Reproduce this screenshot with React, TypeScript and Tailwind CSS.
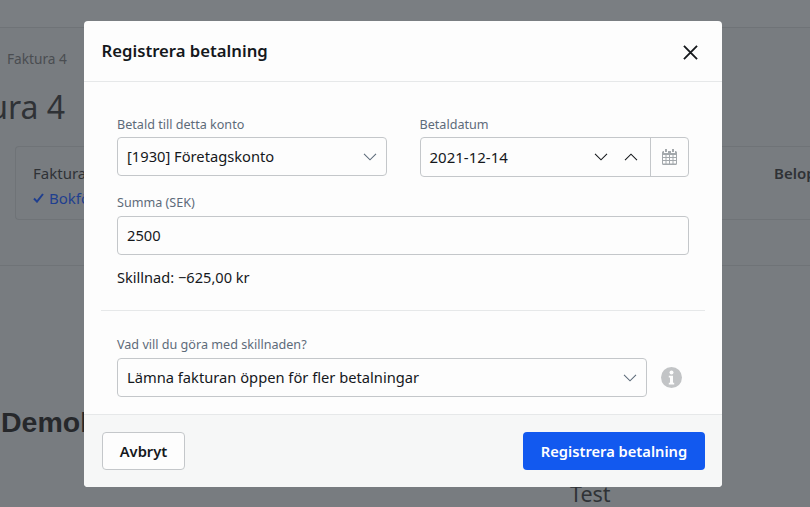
import React from "react";

function Chevron({ up = false, className = "" }: { up?: boolean; className?: string }) {
  return (
    <svg width="14" height="8" viewBox="0 0 14 8" fill="none" className={className}>
      <path d={up ? "M1 7.2 7 1.2l6 6" : "M1 .8l6 6 6-6"} stroke="currentColor" strokeWidth="1.1" />
    </svg>
  );
}

function Background() {
  return (
    <div className="h-[507px] w-[810px] overflow-hidden bg-[#787c80] font-['Noto_Sans',sans-serif] text-[#2f3236]">
      <div className="h-[28px] border-b border-[#6f7377] bg-[#7a7e82]" />
      <div className="pl-[7px] pt-[22px] text-[13.7px] leading-[18px] text-[#4a4d51]">Faktura 4</div>
      <div className="ml-[-75px] mt-[17px] text-[32px] leading-[44px] text-[#2f3236]">Faktura 4</div>
      <div className="ml-[15px] mt-[17px] flex h-[74px] justify-between rounded-l border border-r-0 border-[#6f7377] pl-[17px] pt-[14px] text-[15px] leading-[24px]">
        <div>
          <div className="text-[#2f3236]">Faktura</div>
          <div className="mt-[1px] flex items-center gap-[5px] text-[#1f3f8f]">
            <svg width="11" height="10" viewBox="0 0 11 10" fill="none">
              <path d="M1 5.5 4 8.6 10 1" stroke="currentColor" strokeWidth="2" />
            </svg>
            <span>Bokförd</span>
          </div>
        </div>
        <div className="mr-[-15px] w-[51px] font-semibold">Belopp</div>
      </div>
      <div className="mt-[45px] border-t border-[#6f7377]" />
      <div className="mt-[139px] pl-[1px] font-['Liberation_Sans',sans-serif] text-[28.5px] font-bold leading-[34px] text-[#26282b]">Demolition</div>
      <div className="mt-[41px] pl-[570px] text-[21.5px] leading-[28px] text-[#2f3236]">Test</div>
    </div>
  );
}

export default function App() {
  return (
    <div className="relative h-[507px] w-[810px] overflow-hidden font-['Noto_Sans',sans-serif]">
      <Background />
      <div className="absolute left-[84px] top-[21px] flex h-[466px] w-[638px] flex-col overflow-hidden rounded bg-[#fdfdfd] text-[#15181c]">
        <div className="flex h-[61px] items-center justify-between border-b border-[#e6e8e9] pl-[17.5px] pr-[24px]">
          <div className="text-[16.7px] font-semibold leading-[24px] text-[#15181c]">Registrera betalning</div>
          <svg width="15" height="15" viewBox="0 0 16 16" fill="none" className="mt-[3px] text-[#15181c]">
            <path d="M1 1l14 14M15 1 1 15" stroke="currentColor" strokeWidth="2" />
          </svg>
        </div>

        <div className="flex-1 px-[33px] pt-[33px]">
          <div className="flex gap-[32.5px]">
            <div className="w-[270px]">
              <div className="text-[12.6px] leading-[20px] text-[#5d6b7a]">Betald till detta konto</div>
              <div className="mt-[2px] flex h-[39px] items-center justify-between rounded border border-[#c4c7ca] pl-[9px] pr-[9px] text-[14.7px]">
                <span>[1930] Företagskonto</span>
                <Chevron className="text-[#5d6b7a]" />
              </div>
            </div>
            <div className="w-[269.5px]">
              <div className="text-[12.6px] leading-[20px] text-[#5d6b7a]">Betaldatum</div>
              <div className="mt-[2px] flex h-[40px] rounded border border-[#c4c7ca] text-[15px]">
                <div className="flex flex-1 items-center justify-between pl-[9px] pr-[12px]">
                  <span>2021-12-14</span>
                  <div className="flex items-center gap-[16px] text-[#15181c]">
                    <Chevron />
                    <Chevron up />
                  </div>
                </div>
                <div className="flex w-[38px] items-center justify-center border-l border-[#c4c7ca]">
                  <svg width="15" height="16" viewBox="0 0 15 16" className="text-[#a3a8ac]">
                    <path fill="currentColor" fillRule="evenodd" d="M3 0h2v3H3zM10 0h2v3h-2zM1.5 2H2v2h4V2h3v2h4V2h.5A1.5 1.5 0 0 1 15 3.5v11a1.5 1.5 0 0 1-1.5 1.5h-12A1.5 1.5 0 0 1 0 14.5v-11A1.5 1.5 0 0 1 1.5 2ZM1 6v2h2.5V6Zm3.5 0v2h2.5V6ZM8 6v2h2.5V6Zm3.5 0v2H14V6ZM1 9v2h2.5V9Zm3.5 0v2h2.5V9ZM8 9v2h2.5V9Zm3.5 0v2H14V9ZM1 12v2.5h2.5V12Zm3.5 0v2.5h2.5V12ZM8 12v2.5h2.5V12Zm3.5 0v2.5H14V12Z" />
                  </svg>
                </div>
              </div>
            </div>
          </div>

          <div className="mt-[16px] text-[12.6px] leading-[20px] text-[#5d6b7a]">Summa (SEK)</div>
          <div className="mt-[3px] flex h-[39px] items-center rounded border border-[#c4c7ca] pl-[9px] text-[14.7px]">2500</div>
          <div className="mt-[12px] text-[14.6px] leading-[20px]">Skillnad: −625,00 kr</div>
          <div className="mx-[-16px] mt-[23px] border-t border-[#e6e8e9]" />
          <div className="mt-[24px] text-[12.6px] leading-[20px] text-[#5d6b7a]">Vad vill du göra med skillnaden?</div>
          <div className="mt-[3px] flex items-center gap-[14.5px]">
            <div className="flex h-[39px] w-[529.5px] items-center justify-between rounded border border-[#c4c7ca] pl-[9px] pr-[9px] text-[14.7px]">
              <span>Lämna fakturan öppen för fler betalningar</span>
              <Chevron className="text-[#5d6b7a]" />
            </div>
            <svg width="21" height="21" viewBox="0 0 21 21">
              <circle cx="10.5" cy="10.5" r="10.5" fill="#c2c4c6" />
              <circle cx="10.5" cy="5.4" r="2" fill="#fdfdfd" />
              <path d="M7.8 8.8h4.2v7h1.2v1.8H7.8v-1.8H9v-5.2H7.8z" fill="#fdfdfd" />
            </svg>
          </div>
        </div>

        <div className="flex h-[73px] items-center justify-between border-t border-[#e6e8e9] bg-[#f6f7f7] pl-[18px] pr-[17px]">
          <button className="h-[38px] w-[83px] rounded border border-[#c4c7ca] bg-[#fdfdfd] text-[14.7px] font-semibold text-[#15181c]">Avbryt</button>
          <button className="h-[38px] w-[182px] rounded bg-[#1259ef] text-[14.7px] font-semibold text-white">Registrera betalning</button>
        </div>
      </div>
    </div>
  );
}
